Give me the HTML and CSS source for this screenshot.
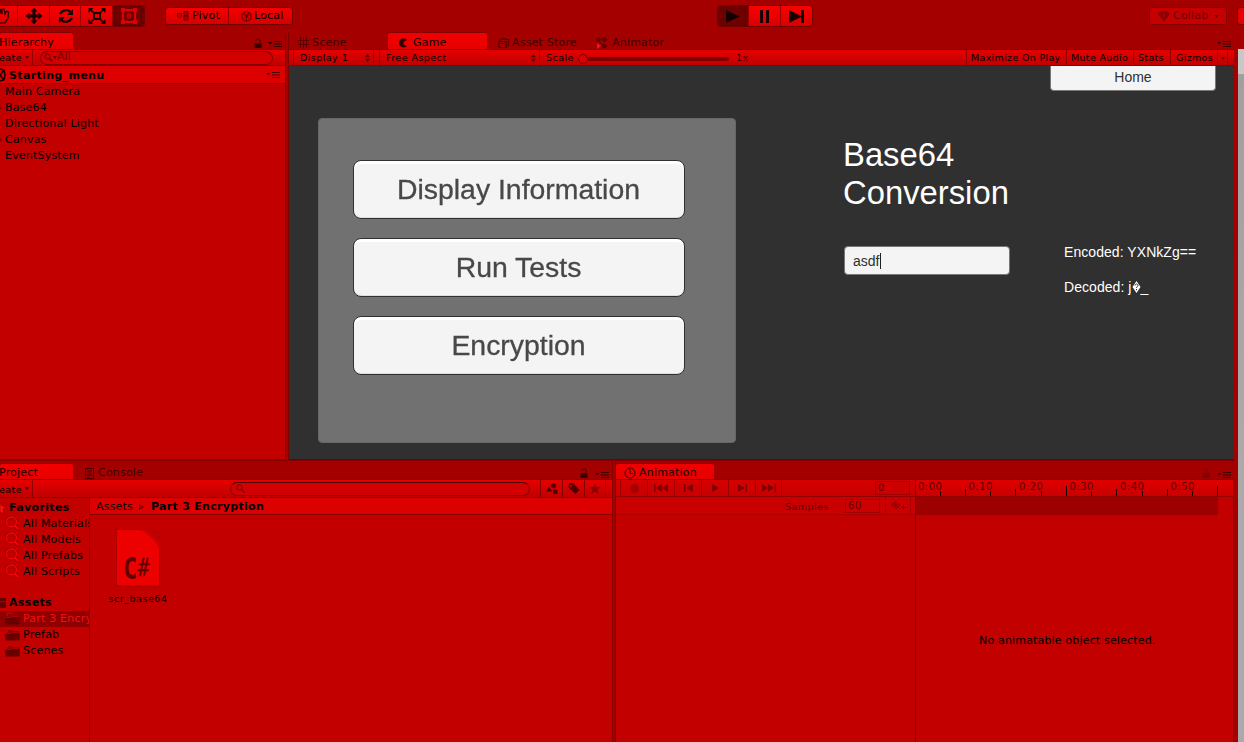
FILE: index.html
```html
<!DOCTYPE html>
<html lang="en">
<head>
<meta charset="utf-8">
<title>Starting_menu - Editor</title>
<link rel="stylesheet" href="styles.css">
</head>
<body>
<svg width="0" height="0" class="defs">
  <symbol id="lock" viewBox="0 0 8 10"><path d="M2 3V2.500C2 .2 6 .2 6 2.500V5" fill="none" stroke="currentColor" stroke-width="1"/><path d="M.5 5h7v5h-7z" fill="currentColor"/></symbol>
  <symbol id="menu" viewBox="0 0 14 6"><path d="M0 1h4.500L2.250 3.500z" fill="currentColor"/><path d="M6 .5h8M6 3h8M6 5.500h8" stroke="currentColor"/></symbol>
  <symbol id="down" viewBox="0 0 4 3"><path d="M0 0h4L2 3z" fill="currentColor"/></symbol>
  <symbol id="updown" viewBox="0 0 5 8"><path d="M0 3.300L2.500 0 5 3.300zM0 4.700L2.500 8 5 4.700z" fill="currentColor"/></symbol>
  <symbol id="mag" viewBox="0 0 15 15"><path d="M9.500 9.500L13.500 13.500" stroke="#980000" stroke-width="3.600"/><circle cx="6.500" cy="6" r="4.900" fill="none" stroke="#980000" stroke-width="2.800"/><circle cx="6.500" cy="6" r="4.900" fill="none" stroke="#f40404" stroke-width="1.600"/><path d="M9.800 9.800L13.500 13.300" stroke="#f40404" stroke-width="2.200"/></symbol>
  <symbol id="find" viewBox="0 0 9 9"><circle cx="3.500" cy="3.500" r="2.700" fill="none" stroke="currentColor"/><path d="M5.500 5.500L8.500 8.500" stroke="currentColor" stroke-width="1.300"/></symbol>
  <symbol id="folder" viewBox="0 0 15 13"><path d="M2 12V1.500h5l1 1.500h6v9z" fill="#900000"/><path d="M0 5.500h6.500L8 4h7l-.5 8.500H.5z" fill="#680000"/><path d="M2 4V1h5l1 1.500" fill="none" stroke="#d80000"/><path d="M0 5.500h6.500L8 4.500h7" fill="none" stroke="#b00000"/></symbol>
</svg>
<div class="editor">
  <header class="topbar">
    <div class="tools">
      <span class="tool hand"><svg width="13" height="18" viewBox="0 0 13 18"><path d="M0 3l1-.5 1 4.500V2.500l2-.5 1 5 1.500-3 2 1L8 11l-3 5H0M0 2v5" fill="none" stroke="#180000" stroke-width="1.200"/></svg></span>
      <span class="tool"><svg width="18" height="18" viewBox="0 0 18 18"><path d="M9 3v12M3 9h12" stroke="#180000" stroke-width="3"/><path d="M9 .5L12.500 4.500h-7zM9 17.500L12.500 13.500h-7zM.5 9L4.500 5.500v7zM17.500 9L13.500 5.500v7z" fill="#180000"/></svg></span>
      <span class="tool"><svg width="18" height="16" viewBox="0 0 18 16"><path d="M3 6C6 1 12 1 14 5M15 10C12 15 6 15 4 11" fill="none" stroke="#180000" stroke-width="2.300"/><path d="M16 1v6h-6zM2 15V9h6z" fill="#180000"/></svg></span>
      <span class="tool"><svg width="18" height="18" viewBox="0 0 18 18"><path d="M6 6h6v6H6z" fill="none" stroke="#180000" stroke-width="2"/><path d="M2 2l4 4M16 2l-4 4M2 16l4-4M16 16l-4-4" stroke="#180000" stroke-width="1.500"/><path d="M.5 1h5l-5 5zM17.500 1h-5l5 5zM.5 17h5l-5-5zM17.500 17h-5l5-5z" fill="#180000"/></svg></span>
      <span class="tool on"><svg width="18" height="18" viewBox="0 0 18 18"><path d="M3 3h12v12H3z" fill="none" stroke="#df0000" stroke-width="2"/><path d="M1 1h4v4H1zM13 1h4v4h-4zM1 13h4v4H1zM13 13h4v4h-4z" fill="#e00000"/><circle cx="9" cy="9" r="2" fill="none" stroke="#e00000"/><path d="M8.500 8.500h1v1h-1z" fill="#e00000"/></svg></span>
    </div>
    <div class="pair">
      <span class="pill"><svg width="12" height="10" viewBox="0 0 12 10"><path d="M.5 2.500h4v3l-2 2-2-2zM7 .5h4v4H7zM7 5h4v4H7z" fill="#b00000" stroke="#650000"/></svg>Pivot</span>
      <span class="pill local"><svg width="11" height="11" viewBox="0 0 11 11"><path d="M5.500 .5L10 2.500v5.500L5.500 10.500 1 8V2.500zM1 3l4.500 2L10 3M5.500 5v5.500M3 1.500l5 6M8 1.500l-5 6" fill="none" stroke="#650000"/></svg>Local</span>
    </div>
    <div class="play">
      <span class="tool on"><svg width="14" height="13" viewBox="0 0 14 13"><path d="M0 0l14 6.500L0 13z" fill="#140000"/></svg></span>
      <span class="tool"><svg width="9" height="13" viewBox="0 0 9 13"><path d="M0 0h3v13H0zM6 0h3v13H6z" fill="#180000"/></svg></span>
      <span class="tool"><svg width="15" height="13" viewBox="0 0 15 13"><path d="M0 0l12 6V0h3v13h-3V7L0 13z" fill="#180000"/></svg></span>
    </div>
    <div class="collab"><svg width="12" height="11" viewBox="0 0 12 11"><path d="M3 0h6l3 3-6 8-6-8z" fill="#880000"/><path d="M6 2v4" stroke="#c80000"/></svg>Collab<svg class="dn" width="5" height="3"><use href="#down"/></svg></div>
    <div class="cloud"></div>
  </header>

  <main class="upper">
    <section class="hierarchy">
      <div class="tabs">
        <span class="tab active t-hier">Hierarchy</span>
        <span class="tabicons"><svg class="lk" width="8" height="10"><use href="#lock"/></svg><svg class="mn" width="14" height="6"><use href="#menu"/></svg></span>
      </div>
      <div class="bar">
        <span class="create">eate<svg width="4" height="3"><use href="#down"/></svg></span>
        <span class="search s-hier"><svg width="9" height="9"><use href="#find"/></svg><svg class="sd" width="4" height="3"><use href="#down"/></svg><i>All</i></span>
      </div>
      <div class="scene"><svg width="7" height="14" viewBox="0 0 7 14"><path d="M0 1l4 1 1 5-1 5-4 1M0 7l4-5M0 7l4 5" fill="none" stroke="#180000" stroke-width="1.500"/></svg><b>Starting_menu</b><svg class="mn" width="14" height="6"><use href="#menu"/></svg></div>
      <ul class="tree">
        <li>Main Camera</li><li class="kid">Base64</li><li>Directional Light</li><li class="kid">Canvas</li><li>EventSystem</li>
      </ul>
    </section>

    <section class="game">
      <div class="tabs">
        <span class="tab t-scene"><svg width="11" height="11" viewBox="0 0 11 11"><path d="M2.500 0v11M5.500 0v11M8.500 0v11M0 3.500h11M0 7.500h11" stroke="#5a0000"/></svg>Scene</span>
        <span class="tab active t-game"><svg width="9" height="10" viewBox="0 0 9 10"><path d="M8 2C6-.5 0 .2 0 5s6 5.500 8 3L4.500 6.500V4z" fill="#300000"/></svg>Game</span>
        <span class="tab t-store"><svg width="11" height="10" viewBox="0 0 11 10"><path d="M1 3.500h7v6H1zM1 3.500l2-2h7.500v6L8 9.500M3 5.500h3M4 1.500V.5h3v1" fill="none" stroke="#580000" stroke-width="1.200"/></svg>Asset Store</span>
        <span class="tab t-anim"><svg width="12" height="12" viewBox="0 0 12 12"><g fill="#780000" stroke="#480000"><circle cx="2.500" cy="2.500" r="1.800"/><circle cx="8.500" cy="2.500" r="1.800"/><circle cx="8.500" cy="9" r="1.800"/></g><path d="M3 4l4 4" stroke="#480000"/><path d="M1 6l4 3-4 3z" fill="#ff1010"/></svg>Animator</span>
        <span class="tabicons"><svg class="mn" width="14" height="6"><use href="#menu"/></svg></span>
      </div>
      <div class="bar gbar">
        <span class="g-display">Display 1<svg width="5" height="8"><use href="#updown"/></svg></span>
        <span class="g-aspect">Free Aspect<svg width="5" height="8"><use href="#updown"/></svg></span>
        <span class="g-scale">Scale</span>
        <span class="slider"><i></i></span>
        <span class="g-x">1x</span>
        <span class="g-btn g-max">Maximize On Play</span><span class="g-btn g-mute">Mute Audio</span><span class="g-btn g-stats">Stats</span><span class="g-btn g-giz">Gizmos</span><span class="g-drop"><svg width="4" height="3"><use href="#down"/></svg></span>
      </div>
      <div class="view">
        <div class="menu-panel">
          <div class="bigbtn"><span>Display Information</span></div>
          <div class="bigbtn"><span>Run Tests</span></div>
          <div class="bigbtn"><span>Encryption</span></div>
        </div>
        <div class="convert">
          <div class="home">Home</div>
          <h1>Base64<br>Conversion</h1>
          <div class="io">
            <div class="field">asdf<i></i></div>
            <div class="results"><p>Encoded: YXNkZg==</p><p>Decoded: j<svg width="9" height="12" viewBox="0 0 8 12"><path d="M4 0l4 6-4 6-4-6z" fill="#fff"/><path d="M2.500 4.500C2.500 2.500 5.500 2.500 5.500 4.500 5.500 5.500 4 5.500 4 7M4 8v1.200" fill="none" stroke="#303030"/></svg>_</p></div>
          </div>
        </div>
      </div>
    </section>
    <aside class="edge"></aside>
  </main>

  <main class="lower">
    <section class="project">
      <div class="tabs">
        <span class="tab active t-proj">Project</span>
        <span class="tab t-cons"><svg width="9" height="11" viewBox="0 0 9 11"><path d="M.5 .5h8v10h-8zM2 3h5M2 5h4M2 7h5M2 9h3" fill="none" stroke="#4d0000"/></svg>Console</span>
        <span class="tabicons"><svg class="lk" width="8" height="10"><use href="#lock"/></svg><svg class="mn" width="14" height="6"><use href="#menu"/></svg></span>
      </div>
      <div class="bar">
        <span class="create">eate<svg width="4" height="3"><use href="#down"/></svg></span>
        <span class="search s-proj"><svg width="9" height="9"><use href="#find"/></svg></span>
        <span class="ib"><svg width="12" height="11" viewBox="0 0 12 11"><circle cx="7.500" cy="2.800" r="2.500"/><path d="M0 8.500l3-5 3 5zM7 6.500h4.500V11H7z"/></svg></span>
        <span class="ib"><svg width="12" height="11" viewBox="0 0 12 11"><path fill-rule="evenodd" d="M1 0h4l6.500 7-4 4L.5 4.500zM3 2a1 1 0 100 2 1 1 0 000-2z"/></svg></span>
        <span class="ib star"><svg width="12" height="11" viewBox="0 0 12 11"><path d="M6 0l1.500 4H12L8.500 6.500 9.500 11 6 8.500 2.500 11l1-4.500L0 4h4.500z"/></svg></span>
      </div>
      <div class="body">
        <nav>
          <div class="h"><svg width="6" height="14" viewBox="0 0 6 14"><path d="M0 1l2 4 4 .5-3 3L4 13l-4-2z" fill="#ff1010" stroke="#900000" stroke-width=".6"/></svg><b>Favorites</b></div>
          <div><svg width="15" height="15"><use href="#mag"/></svg>All Materials</div>
          <div><svg width="15" height="15"><use href="#mag"/></svg>All Models</div>
          <div><svg width="15" height="15"><use href="#mag"/></svg>All Prefabs</div>
          <div><svg width="15" height="15"><use href="#mag"/></svg>All Scripts</div>
          <div class="h gap"><svg width="6" height="10" viewBox="0 0 6 10"><path d="M0 0h6v10H0z" fill="#680000"/><path d="M0 3.500h6" stroke="#a00000"/></svg><b>Assets</b></div>
          <div class="sel"><svg width="15" height="13"><use href="#folder"/></svg>Part 3 Encryption</div>
          <div><svg width="15" height="13"><use href="#folder"/></svg>Prefab</div>
          <div><svg width="15" height="13"><use href="#folder"/></svg>Scenes</div>
        </nav>
        <div class="files">
          <div class="crumbs"><span>Assets</span><svg width="5" height="6" viewBox="0 0 5 6"><path d="M0 0l5 3-5 3z" fill="#780000"/></svg><b>Part 3 Encryption</b></div>
          <div class="file">
            <div class="doc"><svg width="44" height="58" viewBox="0 0 44 58"><defs><linearGradient id="fold" x1="1" y1="0" x2="0" y2="1"><stop offset="0" stop-color="#b00000"/><stop offset="1" stop-color="#ee0000"/></linearGradient></defs><path d="M.5 .5L24 .5Q34 2 42 3.500L43.500 18V57H.5z" fill="#ec0000" stroke="#a00000" stroke-width=".7"/><path d="M25 .8Q34 2 41.500 3.500L43 20Q40 10 25 .8z" fill="url(#fold)"/></svg><span>C<em>#</em></span></div>
            <label>scr_base64</label>
          </div>
        </div>
      </div>
    </section>
    <section class="animation">
      <div class="tabs">
        <span class="tab active t-animation"><svg width="12" height="12" viewBox="0 0 12 12"><circle cx="6" cy="6" r="5" fill="none" stroke="#400000"/><path d="M6 2v4.500h3" fill="none" stroke="#400000"/></svg>Animation</span>
        <span class="tabicons"><svg class="lk dim" width="8" height="10"><use href="#lock"/></svg><svg class="mn" width="14" height="6"><use href="#menu"/></svg></span>
      </div>
      <div class="abody">
        <div class="acontrols">
          <div class="bar abar">
            <span><svg width="9" height="9"><circle cx="4.500" cy="4.500" r="4.500" fill="#a80000"/></svg></span>
            <span><svg width="14" height="8" viewBox="0 0 14 8"><path d="M0 0h1.500v8H0zM8 0v8L2 4zM14 0v8L8 4z"/></svg></span>
            <span><svg width="9" height="8" viewBox="0 0 9 8"><path d="M0 0h1.500v8H0zM9 0v8L2 4z"/></svg></span>
            <span><svg width="7" height="8" viewBox="0 0 7 8"><path d="M0 0l7 4-7 4z"/></svg></span>
            <span><svg width="9" height="8" viewBox="0 0 9 8"><path d="M7.500 0H9v8H7.500zM0 0v8l7-4z"/></svg></span>
            <span><svg width="14" height="8" viewBox="0 0 14 8"><path d="M12.500 0H14v8h-1.500zM0 0v8l6-4zM6 0v8l6-4z"/></svg></span>
            <div class="num n0">0</div>
          </div>
          <div class="samples"><label>Samples</label><div class="num">60</div><div class="key"><svg width="15" height="12" viewBox="0 0 15 12"><path d="M5 1l4 4-4 4-4-4zM5 3v4M3 5h4M12.500 5v5M10 7.500h5" fill="none" stroke="#800000"/></svg></div></div>
        </div>
        <div class="timeline">
          <div class="ruler">
            <span>0:00</span><span>0:10</span><span>0:20</span><span>0:30</span><span>0:40</span><span>0:50</span>
            <svg width="318" height="16" viewBox="0 0 318 16"><path d="M24.500 11v5M49.500 9v7M74.500 11v5M99.500 9v7M125.500 11v5M150.500 6v10M175.500 11v5M200.500 9v7M226.500 11v5M251.500 9v7M276.500 11v5M301.500 6v10" stroke="#180000"/></svg>
          </div>
          <div class="dope"></div>
          <p>No animatable object selected.</p>
        </div>
      </div>
    </section>
    <aside class="edge"></aside>
  </main>
</div>
</body>
</html>
```
FILE: styles.css
```css
* { box-sizing: border-box; }
html, body { margin: 0; overflow: hidden; }
body { width: 1244px; height: 742px; background: #a40000; font: 11px/16px "DejaVu Sans", sans-serif; letter-spacing: .2px; color: #000; white-space: nowrap; }
svg { display: block; flex: none; }
b { letter-spacing: .35px; color: #000; }
i, em { font-style: normal; }
.defs { position: absolute; }
.editor { width: 1244px; height: 742px; display: flex; flex-direction: column; overflow: hidden; }

.topbar { height: 33px; flex: none; display: flex; align-items: flex-start; padding-top: 5px; }
.tools, .play { display: flex; height: 22px; border: 1px solid #700000; border-radius: 4px; overflow: hidden; }
.tools { width: 145px; border-left: 0; border-radius: 0 4px 4px 0; }
.tool { width: 32px; display: flex; align-items: center; justify-content: center; background: linear-gradient(#fd0000, #d80000); border-right: 1px solid #980000; }
.tool:last-child { border-right: 0; }
.tool.hand { width: 18px; justify-content: flex-start; }
.tool.on { background: radial-gradient(#7c0000, #640000); }
.tools .tool { padding-left: 1px; }
.tools .tool.hand { padding-left: 0; }
.tools .tool.on { width: 31px; }
.pair { display: flex; width: 128px; height: 18px; margin: 2px 0 0 20px; border: 1px solid #700000; border-radius: 3px; overflow: hidden; background: linear-gradient(#f60000, #d40000); }
.pill { display: flex; align-items: center; gap: 3px; width: 64px; padding-left: 11px; border-right: 1px solid #900000; }
.pill.local { border: 0; gap: 2px; padding-left: 12px; }
.play { width: 96px; margin-left: 424px; }
.collab { display: flex; align-items: center; gap: 3px; width: 78px; height: 18px; margin: 2px 0 0 336px; padding-left: 8px; border: 1px solid #800000; border-radius: 3px; background: #c60000; color: #680000; }
.collab .dn { margin-left: 3px; color: #680000; }
.cloud { width: 7px; height: 18px; margin: 2px 0 0 10px; border: 1px solid #700000; border-right: 0; border-radius: 3px 0 0 3px; background: #e80000; }

.upper { height: 427px; flex: none; display: flex; }
.hierarchy { width: 286px; height: 427px; background: #c20000; border-right: 1px solid #850000; border-bottom: 1px solid #850000; }
.tabs { display: flex; height: 16px; background: #a40000; color: #3c0000; }
.tab { display: flex; align-items: center; height: 16px; padding-top: 3px; }
.tab.active { background: linear-gradient(#f20000, #e60000); color: #100000; border-radius: 2px 2px 0 0; box-shadow: 0 -1px #850000; }
.tabicons { display: flex; align-items: center; gap: 7px; margin-left: auto; color: #380000; padding-top: 6px; }
.lk { margin-top: -3px; }
.dim { color: #800000; }
.t-hier { width: 73px; text-indent: -1px; }
.hierarchy .tabicons { padding-right: 3px; gap: 6px; }
.bar { height: 17px; display: flex; align-items: center; background: linear-gradient(#e60000, #c00000); border-top: 1px solid #800000; border-bottom: 1px solid #900000; font-size: 9.500px; letter-spacing: .45px; }
.create { display: flex; align-items: center; width: 33px; height: 100%; border-right: 1px solid #900000; gap: 3px; padding-top: 1px; text-indent: -1px; }
.create svg { color: #500000; margin-top: -2px; }
.search { display: flex; align-items: center; height: 14px; border: 1px solid #840000; border-top-color: #500000; border-radius: 7px; background: #d20000; color: #700000; }
.s-hier { width: 233px; margin-left: 7px; padding-left: 3px; font-size: 11px; letter-spacing: 0; }
.s-hier i { margin: -1px 0 0 0; }
.scene { display: flex; align-items: center; gap: 2px; height: 18px; background: #dd0000; border-bottom: 1px solid #a00000; }
.scene b { padding-top: 2px; }
.scene .mn { margin-left: auto; margin-right: 5px; color: #500000; }
.tree { list-style: none; margin: 0; padding: 0 0 0 5px; }
.tree li { height: 16px; }
.tree .kid::before { content: ""; float: left; margin: 6px 0 0 -5px; border: 2px solid transparent; border-left-color: #780000; border-right: 0; }

.game { width: 949px; margin-left: 2px; padding-right: 3px; border-left: 1px solid #800000; height: 427px; }
.t-scene { width: 99px; padding-left: 9px; gap: 3px; }
.t-game { width: 99px; padding-left: 11px; gap: 5px; }
.t-store { width: 98px; padding-left: 11px; gap: 3px; }
.t-anim { padding-left: 11px; gap: 4px; }
.game .tabicons { padding-right: 3px; }
.gbar > span { display: flex; align-items: center; height: 100%; flex: none; padding-top: 1px; }
.g-display { width: 81px; padding-left: 6px; margin-left: 4px; border-left: 1px solid #900000; border-right: 1px solid #900000; justify-content: space-between; padding-right: 3px; }
.g-aspect { width: 161px; margin-left: 5px; padding-left: 6px; padding-right: 3px; border-left: 1px solid #900000; border-right: 1px solid #900000; justify-content: space-between; }
.gbar svg { color: #500000; }
.g-scale { width: 38px; padding-left: 6px; }
.gbar .slider { width: 151px; height: 4px; padding: 0; background: #800000; border-radius: 2px; margin-top: 2px; margin-left: 0; }
.slider i { width: 10px; height: 10px; border: 1px solid #780000; border-radius: 50%; background: #da0000; flex: none; }
.g-x { margin-left: 7px; color: #300000; }
.g-btn { border-left: 1px solid #900000; padding-left: 4px; letter-spacing: .32px; }
.g-max { margin-left: auto; width: 100px; }
.g-mute { width: 67px; }
.g-stats { width: 37px; }
.g-giz { width: 47px; padding-left: 5px; }
.g-drop { width: 11px; padding-left: 3px; border-left: 1px solid #a80000; border-right: 1px solid #900000; margin-right: 6px; }
.view { display: flex; height: 394px; background: #303030; font-family: "Liberation Sans", Arial, sans-serif; letter-spacing: 0; border-bottom: 1px solid #202020; }
.menu-panel { width: 418px; height: 325px; margin: 52px 0 0 29px; padding: 41px 0 0 34px; display: flex; flex-direction: column; gap: 19px; background: #717171; border: 1px solid #666; border-radius: 4px; }
.bigbtn { width: 332px; height: 59px; padding: 0 1px 2px 0; border: 1px solid #303030; border-radius: 8px; background: #f4f4f4; box-shadow: inset 0 3px #fff, inset 0 -1px #ddd; display: flex; align-items: center; justify-content: center; font-size: 28.400px; color: #484848; }
.bigbtn span { filter: blur(.6px); -webkit-text-stroke: .3px #484848; }
.convert { width: 373px; margin-left: 107px; }
.home { width: 166px; height: 25px; margin-left: 207px; border: 1px solid #777; border-top: 0; border-radius: 0 0 4px 4px; background: #f4f4f4; text-align: center; font-size: 14px; line-height: 23px; color: #303030; }
h1 { margin: 45px 0 0 0; font-weight: normal; font-size: 32.800px; line-height: 38px; color: #fff; }
.io { display: flex; margin-top: 34px; }
.field { display: flex; align-items: center; width: 166px; height: 29px; margin: 0 0 0 1px; padding-left: 8px; border: 1px solid #777; border-radius: 4px; background: #f4f4f4; color: #303030; font-size: 14px; }
.field i { width: 1px; height: 16px; margin-left: 1px; background: #202020; }
.results { margin-left: 54px; font-size: 14px; color: #fff; letter-spacing: .06px; }
.results p { display: flex; align-items: center; margin: -2px 0 21px; }
.edge { width: 6px; background: #aaa; }
.upper .edge { margin-top: 16px; margin-left: 1px; background: linear-gradient(#c8c8c8 25px, #a0a0a0 25px, #aaa); }

.lower { height: 282px; flex: none; display: flex; }
.lower .tabs { height: 19px; padding-top: 3px; border-top: 1px solid #850000; }
.lower .tab { height: 15px; padding-top: 3px; }
.project { width: 613px; background: #c20000; border-right: 1px solid #850000; }
.lower .tabicons { padding-right: 3px; padding-top: 6px; }
.t-proj { width: 73px; text-indent: -1px; }
.t-cons { padding-left: 12px; gap: 4px; }
.project .bar { height: 19px; }
.project .create { padding-top: 2px; }
.s-proj { width: 300px; margin-left: 197px; padding-left: 5px; margin-right: 10px; }
.ib { display: flex; align-items: center; justify-content: center; width: 22px; height: 100%; border-left: 1px solid #800000; fill: #500000; }
.ib.star { fill: #900000; border-right: 1px solid #b00000; }
.body { display: flex; height: 244px; }
nav { width: 90px; overflow: hidden; border-right: 1px solid #950000; flex: none; padding-top: 2px; }
nav div { display: flex; align-items: center; height: 16px; padding-left: 5px; gap: 3px; }
nav div svg { margin-top: -2px; }
nav .h { padding-left: 0; }
nav .h svg { margin-top: 0; }
nav .gap { margin-top: 15px; }
nav .sel { background: #900000; color: #f01010; }
.files { flex: 1; }
.crumbs { display: flex; align-items: center; height: 17px; padding-left: 6px; padding-top: 2px; background: #dd0000; border-bottom: 1px solid #800000; }
.crumbs svg { margin: 0 7px 0 6px; }
.crumbs b { letter-spacing: .3px; }
.file { width: 96px; margin-top: 14px; display: flex; flex-direction: column; align-items: center; }
.doc { display: grid; width: 44px; }
.doc svg, .doc span { grid-area: 1 / 1; }
.doc span { font: bold 30px/30px "DejaVu Sans Mono", monospace; color: #600000; align-self: end; justify-self: start; padding: 0 0 3px 9px; transform: scaleX(.8); transform-origin: left; width: 48px; }
.doc em { font-size: 25px; font-weight: normal; vertical-align: 3px; -webkit-text-stroke: .4px #600000; }
.file label { font-size: 9.500px; letter-spacing: .55px; margin-top: 4px; }

.animation { width: 619px; margin-left: 2px; margin-right: 4px; background: #c20000; border-left: 1px solid #850000; }
.t-animation { width: 98px; padding-left: 8px; gap: 3px; }
.abody { display: flex; height: 263px; border-right: 1px solid #850000; }
.acontrols { width: 300px; border-right: 1px solid #800000; }
.abar { height: 18px; padding-left: 4px; background: linear-gradient(#d60000, #c80000); }
.abar span { width: 27px; height: 100%; display: flex; align-items: center; justify-content: center; border-left: 1px solid #a00000; fill: #800000; }
.abar span:nth-child(6) { border-right: 1px solid #a00000; }
.num { width: 35px; height: 14px; border: 1px solid #a00000; background: #cc0000; padding-left: 2px; color: #600000; line-height: 12px; font-size: 10px; letter-spacing: .6px; }
.n0 { margin-left: auto; margin-right: 5px; }
.samples { display: flex; align-items: center; height: 18px; justify-content: flex-end; border-bottom: 1px solid #aa0000; background: #ca0000; color: #600000; }
.samples label { font-size: 9.500px; letter-spacing: .5px; margin-right: 16px; padding-top: 2px; }
.key { width: 26px; height: 17px; margin: 0 4px 0 5px; padding: 3px 0 0 5px; border-left: 1px solid #a80000; border-right: 1px solid #a80000; }
.timeline { flex: 1; }
.ruler { display: grid; grid-template-columns: repeat(6, 50.500px); height: 18px; padding-left: 2px; border-top: 1px solid #800000; border-bottom: 1px solid #900000; background: linear-gradient(#e00000, #c80000); color: #580000; line-height: 14px; letter-spacing: .5px; font-size: 10px; }
.ruler span { grid-row: 1; }
.ruler svg { grid-row: 1; grid-column: 1; margin-left: -2px; }
.ruler span:nth-child(1) { grid-column: 1; }
.dope { width: 302px; height: 18px; background: #9d0000; }
.timeline p { margin: 118px 0 0 63px; letter-spacing: .17px; }
```
